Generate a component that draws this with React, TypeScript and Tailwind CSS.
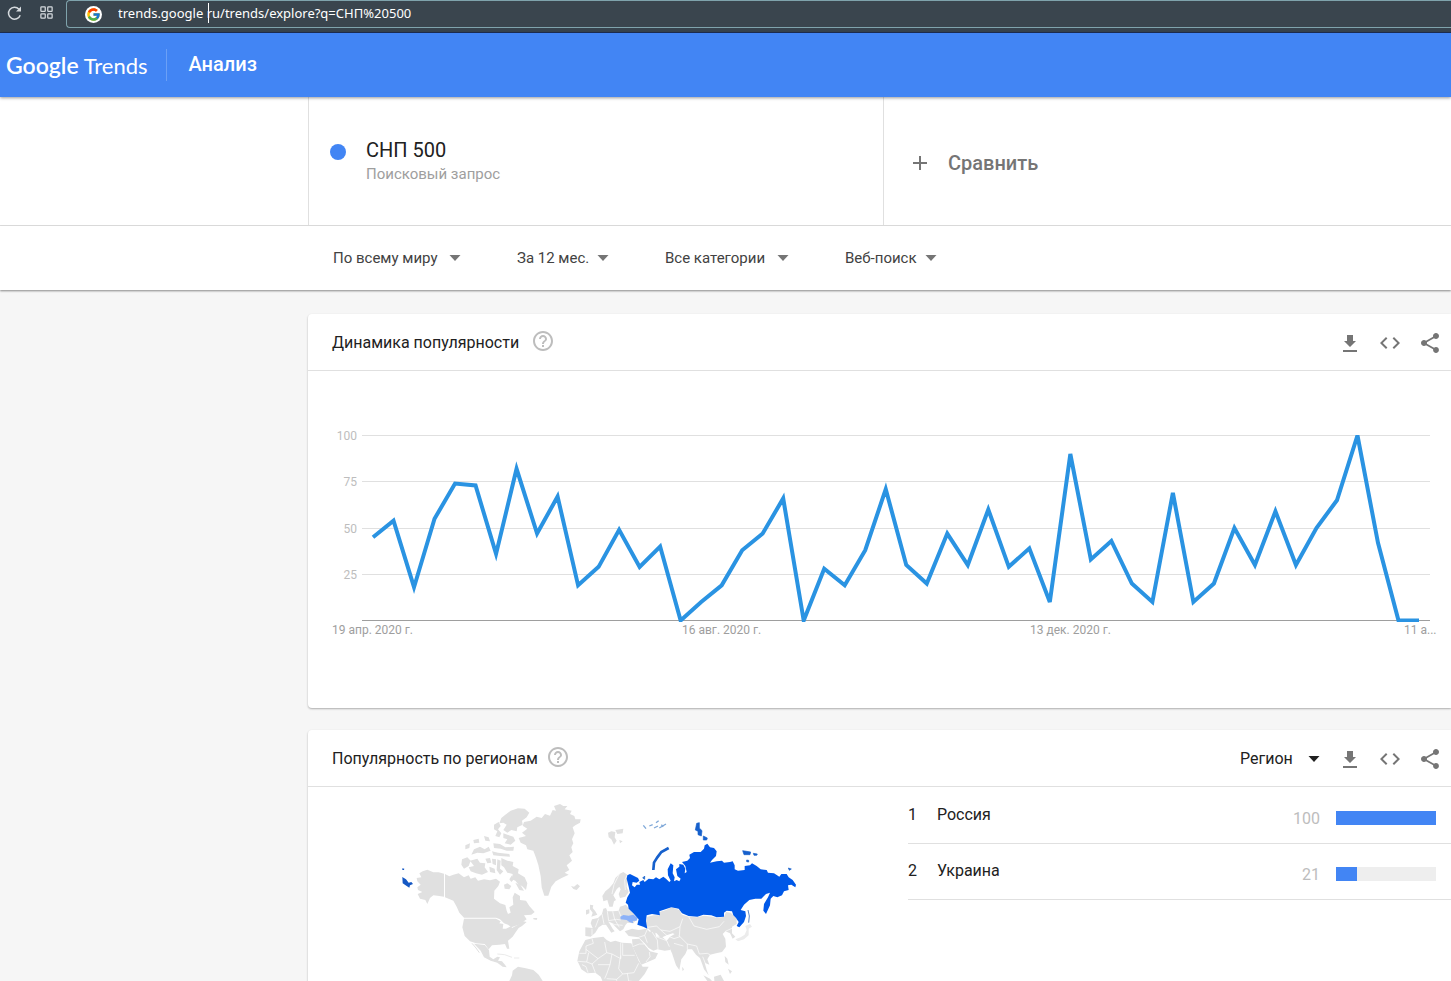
import { useState } from "react";
import type { ReactNode } from "react";
import { FcGoogle } from "react-icons/fc";
import { LuLayoutGrid } from "react-icons/lu";
import { MdAdd, MdCode, MdHelpOutline, MdShare } from "react-icons/md";

// Weekly interest values, 0-100
const interest = [
  45, 54, 18, 55, 74, 73, 36, 82, 47, 67, 19, 29, 49, 29, 40, 0, 10, 19, 38, 47, 66, 0, 28, 19, 38, 71,
  30, 20, 47, 30, 60, 29, 39, 10, 90, 33, 43, 20, 10, 69, 10, 20, 50, 30, 59, 30, 50, 65, 100, 42, 0, 0,
];

const gridLines = [
  { value: 100, y: 64 },
  { value: 75, y: 110 },
  { value: 50, y: 157 },
  { value: 25, y: 203 },
];

const dateLabels = [
  { text: "19 апр. 2020 г.", x: 24 },
  { text: "16 авг. 2020 г.", x: 374 },
  { text: "13 дек. 2020 г.", x: 722 },
  { text: "11 а...", x: 1096 },
];

const filters = [
  { id: "geo", label: "Местоположение", value: "По всему миру", width: "w-[134px]" },
  { id: "time", label: "Период", value: "За 12 мес.", width: "w-[98px]" },
  { id: "category", label: "Категория", value: "Все категории", width: "w-[130px]" },
  { id: "source", label: "Источник", value: "Веб-поиск", width: "w-[98px]" },
];

const regions = [
  { id: 1, name: "Россия", value: 100 },
  { id: 2, name: "Украина", value: 21 },
];

function Caret() {
  return (
    <svg
      viewBox="0 0 24 24"
      className="pointer-events-none absolute right-0 top-0 h-6 w-6"
      fill="currentColor"
      aria-hidden="true"
    >
      <path d="M6.5 9h11L12 15z" />
    </svg>
  );
}

function BrowserBar() {
  const [url, setUrl] = useState("trends.google ru/trends/explore?q=СНП%20500");

  return (
    <div className="flex h-[33px] shrink-0 items-start bg-[#37434d] border-b border-[#1d2f55] pl-[6px]">
      <button aria-label="Обновить" className="mt-[5px] text-[#d5dade]">
        <svg viewBox="0 0 17 17" className="h-[17px] w-[17px]" fill="none" stroke="currentColor" strokeWidth="1.5">
          <path d="M14.2 10.2A6 6 0 1 1 13 4.2" />
          <path d="M15 1.5V6.5H10Z" fill="currentColor" stroke="none" />
        </svg>
      </button>
      <button aria-label="Экспресс-панель" className="ml-4 mt-[5px] text-[#d5dade]">
        <LuLayoutGrid className="h-[15px] w-[15px]" />
      </button>
      <div className="relative ml-3 flex h-7 flex-1 items-center rounded-l border border-r-0 border-[#7fa3ac] bg-[#3a454e] pl-[18px]">
        <span className="rounded-full bg-white p-px">
          <FcGoogle className="h-[15px] w-[15px]" />
        </span>
        <input
          type="text"
          aria-label="Адрес"
          value={url}
          onChange={(e) => setUrl(e.target.value)}
          className="ml-4 flex-1 bg-transparent font-['Noto_Sans',sans-serif] text-[13px] text-white outline-none"
        />
        <span className="absolute left-[141px] top-[2px] h-5 w-px bg-white" />
      </div>
    </div>
  );
}

function Header() {
  return (
    <header className="relative z-20 flex h-16 shrink-0 items-center bg-[#4285f4] pl-[6px] text-white shadow-[0_1px_3px_rgba(0,0,0,0.4)]">
      <a href="#" className="flex items-baseline gap-[5px] font-['Lato',sans-serif] leading-8">
        <span className="text-[23px] font-semibold">Google</span>
        <span className="text-[22px] font-normal">Trends</span>
      </a>
      <div className="ml-[18px] h-8 w-px bg-[#6ba0f6]" />
      <h1 className="ml-[22px] pb-[2px] text-xl font-medium">Анализ</h1>
    </header>
  );
}

function QueryRow() {
  return (
    <div className="flex h-[129px] shrink-0 border-b border-[#e0e0e0] bg-white pl-[308px]">
      <div className="flex w-[576px] items-center border-x border-[#e0e0e0] pl-[21px] pt-[2px]">
        <span className="-mt-5 h-4 w-4 rounded-full bg-[#4285f4]" />
        <div className="ml-5">
          <div className="text-xl leading-6 text-[#212121]">СНП 500</div>
          <div className="text-[15px] leading-6 text-[#9e9e9e]">Поисковый запрос</div>
        </div>
      </div>
      <button className="flex items-center gap-4 pl-6 pt-1 text-xl font-medium text-[#757575]">
        <MdAdd className="h-6 w-6" />
        <span>Сравнить</span>
      </button>
    </div>
  );
}

function FilterRow() {
  return (
    <div className="relative z-10 flex h-16 shrink-0 items-center gap-[50px] bg-white pl-[333px] shadow-[0_1px_2px_rgba(0,0,0,0.45)]">
      {filters.map((filter) => (
        <div key={filter.id} className={`relative text-[#757575] ${filter.width}`}>
          <select
            id={filter.id}
            aria-label={filter.label}
            className="w-full appearance-none bg-transparent text-[15px] text-[#424242] outline-none"
          >
            <option>{filter.value}</option>
          </select>
          <Caret />
        </div>
      ))}
    </div>
  );
}

function CardHeader({ title, helpClass, children }: { title: string; helpClass: string; children?: ReactNode }) {
  return (
    <div className="flex h-[57px] items-center border-b border-[#e0e0e0] pl-6 pr-[9px]">
      <h2 className="pt-px text-base text-[#212121]">{title}</h2>
      <button aria-label="Справка" className={`pb-[2px] text-[#bdbdbd] ${helpClass}`}>
        <MdHelpOutline className="h-6 w-6" />
      </button>
      <div className="ml-auto flex items-center gap-4 pt-[2px] text-[#757575]">
        {children}
        <button aria-label="Скачать CSV">
          <svg viewBox="0 0 24 24" className="h-6 w-6" fill="currentColor">
            <path d="M18 10h-3V4H9v6H6l6 6 6-6zM5 19v2h14v-2H5z" />
          </svg>
        </button>
        <button aria-label="Встроить">
          <MdCode className="h-6 w-6" />
        </button>
        <button aria-label="Поделиться">
          <MdShare className="h-6 w-6" />
        </button>
      </div>
    </div>
  );
}

function TimelineChart() {
  const points = interest.map((value, i) => `${65 + (i * 1046) / 51},${249.5 - value * 1.85}`).join(" ");

  return (
    <svg viewBox="0 0 1143 337" className="block w-full" role="img" aria-label="Динамика популярности">
      <clipPath id="plot-area">
        <rect x="54" y="64" width="1068" height="187" />
      </clipPath>
      {gridLines.map((line) => (
        <g key={line.value}>
          <path d={`M54 ${line.y + 0.5}H1122`} stroke="#e0e0e0" />
          <text x="49" y={line.y + 5} textAnchor="end" fontSize="12" fill="#bdbdbd">
            {line.value}
          </text>
        </g>
      ))}
      <path d="M54 249.5H1122" stroke="#9e9e9e" />
      <polyline points={points} fill="none" stroke="#2a93e2" strokeWidth="4" clipPath="url(#plot-area)" />
      {dateLabels.map((label) => (
        <text key={label.text} x={label.x} y="263" fontSize="12" fill="#9e9e9e">
          {label.text}
        </text>
      ))}
    </svg>
  );
}

function WorldMap() {
  return (
    <svg viewBox="0 0 1260 630" className="h-[210px] w-[420px] shrink-0" role="img" aria-label="Карта мира">
      <g fill="#e0e0e0">
        {/* Greenland, Iceland */}
        <path d="M463 317 455 292 452 258 445 225 438 203 430 182 412 178 408 166 392 158 386 144 408 138 396 128 412 116 398 107 402 96 422 92 440 80 455 84 465 72 480 77 488 60 498 62 492 48 510 42 520 48 532 48 524 58 545 62 540 72 553 78 556 88 572 88 570 98 556 106 548 112 554 130 546 148 550 160 544 172 548 186 538 196 546 212 530 226 538 240 524 248 536 254 515 264 497 274 484 290 475 317Z" />
        <path d="M543 288 552 290 562 282 570 289 560 300 550 297Z" />
        {/* Alaska */}
        <path d="M162 251V320L148 318 130 316 120 324 112 342 106 330 90 326 83 312 97 306 84 300 82 292 92 284 82 274 80 264 94 262 88 250 98 244 112 239 130 247 146 247Z" />
        {/* Canada */}
        <path d="M165 252 178 259 190 254 206 250 222 262 236 256 242 266 256 262 264 272 282 268 300 271 318 266 330 275 325 288 313 302 312 326 330 340 346 345 350 362 354 372 362 368 358 352 370 344 368 322 374 308 390 318 390 330 408 332 418 348 434 366 424 374 402 376 410 388 386 404 364 412 354 404 342 400 330 388 318 383H222L208 368 200 350 190 332 165 322Z" />
        <path d="M334 204 352 212 370 216 368 228 386 238 384 250 404 262 412 280 408 300 396 288 386 284 376 272 366 268 368 252 352 248 342 232 334 226Z" />
        <path d="M342 284 352 280 364 288 358 298 344 296ZM366 256 372 268 364 276 358 268ZM376 278 392 286 402 302 388 300ZM430 384 442 384 440 390 430 388Z" />
        <path d="M328 100 334 84 344 76 362 62 384 55 404 56 418 68 410 82 396 92 398 104 382 112 380 124 364 120 352 128 340 120 350 104 340 98Z" />
        <path d="M312 104 326 96 332 108 324 118 334 130 328 142 316 138 322 124 312 118ZM340 130 352 134 370 140 376 152 362 164 344 160 352 148 340 144Z" />
        <path d="M310 160 330 162 346 172 372 170 370 182 350 182 332 176 312 174ZM282 138 296 142 300 154 286 152ZM250 150 266 146 268 158 252 160ZM226 166 240 160 238 174 226 178ZM252 178 270 170 284 178 296 170 302 182 280 190 262 188 244 194ZM306 184 324 188 358 192 360 200 330 198 310 196Z" />
        <path d="M216 208 232 202 242 212 236 228 222 236 214 224ZM240 212 262 206 270 218 286 220 284 232 294 246 276 254 258 250 242 244 236 232 252 228ZM286 206 300 204 304 218 292 220ZM306 206 318 208 318 226 308 222ZM322 208 332 212 330 236 340 244 330 254 320 240ZM298 230 314 236 316 250 300 246Z" />
        {/* USA, Mexico, Central America */}
        <path d="M222 386H318L332 394 328 400 340 402 338 416 348 416 364 408 366 414 384 404 394 392 410 396 396 408 386 414 376 428 368 440 354 452 358 476 351 476 345 462 328 464 306 466 296 478 284 462 258 460 240 454 224 438 217 412Z" />
        <path d="M252 461 284 465 297 480 299 500 310 508 322 500 330 502 324 512 336 514 346 526 350 532 338 530 322 518 302 512 282 502 272 482Z" />
        <path d="M246 460 258 474 268 488" fill="none" stroke="#e0e0e0" strokeWidth="3" />
        <path d="M322 492 344 494 366 502M372 504 388 504" fill="none" stroke="#ebebeb" strokeWidth="3" />
        {/* South America */}
        <path d="M358 573 366 556 368 542 384 530 404 534 430 540 446 554 458 573 490 592 530 604 520 630H356Z" />
      </g>
      <g transform="translate(540 0)" fill="#e0e0e0">
        {/* Svalbard */}
        <path d="M114 128 124 124 136 126 134 142 140 152 132 164 124 148 116 142ZM136 120 160 116 158 130 142 132ZM148 150 158 154 150 160Z" />
        {/* Scandinavia */}
        <path d="M172 254 160 246 148 252 136 264 130 280 118 294 106 304 97 318 100 334 112 330 118 350 128 350 132 334 138 330 130 316 140 298 148 290 152 298 146 312 150 324 166 320 176 306 170 290Z" />
        {/* British Isles */}
        <path d="M60 344 70 346 68 354 76 364 82 374 64 380 68 368 60 358ZM48 360 58 358 58 370 48 374Z" />
        {/* Continental Europe */}
        <path d="M46 412 68 414 62 400 66 388 84 384 96 372 100 356 108 354 112 364 130 364 146 362 150 350 168 344 178 358 190 370 204 384 190 400 172 398 166 406 160 418 150 424 140 414 126 400 116 396 128 416 134 424 124 428 108 404 98 404 86 412 76 428 62 440 46 438Z" />
        {/* Turkey, Caucasus, Middle East */}
        <path d="M164 424 186 416 206 420 230 416 240 426 246 420 256 428 258 440 276 440 290 452 300 440 318 430 330 440 330 460 310 462 300 480 284 482 262 478 250 482 236 474 224 460 216 452 206 442 176 438Z" />
        <path d="M186 448 208 446 222 462 240 484 264 490 256 506 214 524 202 500 188 470Z" />
        {/* Central Asia */}
        <path d="M230 412 228 396 232 380 250 376 270 376 268 366 288 360 304 352 328 360 336 374 356 380 380 382 402 377 426 380 442 384 462 380 468 366 482 368 490 376 500 388 500 402 486 410 486 430 496 440 488 446 480 430 466 424 458 432 466 446 468 470 456 486 438 490 420 494 412 508 418 524 404 518 410 540 416 556 402 538 390 504 378 494 366 478 352 478 346 492 334 508 328 540 318 526 306 490 298 472 310 460 330 458 328 438 308 430 290 436 272 444 260 430 246 426Z" />
        {/* Islands south of Asia */}
        <path d="M336 530 342 538 338 544ZM400 556 420 566 440 590 424 590ZM432 560 452 554 462 573 450 590 434 582ZM464 498 472 506 476 524 466 516ZM474 536 486 544 480 552Z" />
        {/* Japan */}
        <path d="M496 448 512 442 524 434 530 420 526 408 540 402 546 410 536 416 536 436 522 448 504 454Z" fill="#ececec" />
        {/* Africa */}
        <path d="M46 450 70 444 100 440 110 450 122 456 136 452 156 458 184 460 194 484 206 512 218 530 236 530 224 552 204 576 200 600 206 630H110L104 590 92 560 76 548 52 550 34 538 22 512 28 484Z" />
      </g>
      {/* Country borders */}
      <g transform="translate(540 0)" fill="none" stroke="#fff" strokeWidth="2">
        <path d="M28 490H48V468L70 460 66 446M48 478 84 506 110 488 104 456M110 488 126 492 152 506V458M158 460V496H194M152 506V496M24 514 50 516 56 488M50 516 66 522 84 506M66 522 76 548M84 524H120L126 492M120 524 110 552 104 566M150 506 146 536 158 552 192 548 206 520M158 552 140 568 110 566M140 568V600M172 550 176 573 200 576M36 524 48 530 54 548" />
        <path d="M76 412 86 386M96 372 102 402M112 364 116 392 140 388 152 390M128 364 134 388 148 412M146 362 154 382M116 396 134 404 158 406M66 416V436" />
        <path d="M172 254 164 270 166 300M148 252 132 284 126 312M206 442 224 436 232 418M224 436 232 458M246 426 262 450 264 478M258 440 290 452 298 470M290 436 312 446 330 440M188 470 208 462 222 462M228 516 240 500 238 486" />
        <path d="M232 412 260 408 272 420 300 424 330 410 338 386M272 420 290 436M356 380 372 408 410 418 448 410 462 394M330 410 328 438 352 462 380 468 388 492M352 462 352 478M312 460 340 468M388 492 412 490 420 494M398 500 406 520M466 424 488 414" />
      </g>
      {/* Ukraine */}
      <path
        transform="translate(540 0)"
        d="M151 380 160 375 176 377 190 374 203 384 200 392 188 393 190 400 178 396 170 390 152 388Z"
        fill="#8db2f8"
      />
      {/* Russia */}
      <g fill="#0058e8">
        <g transform="translate(540 0)">
          <path d="M172 256 180 252 192 258 204 264 208 272 200 278 188 276 186 286 194 292 200 284 210 284 208 276 220 270 224 276 236 266 250 268 258 262 268 268 280 260 288 266 298 276 302 272 294 256 293 238 302 220 310 226 308 250 314 262 312 274 320 270 328 274 332 266 322 258 318 238 328 230 328 222 340 224 346 236 344 250 350 246 346 228 336 216 352 212 360 204 358 194 372 186 392 186 402 176 404 166 412 161 420 172 432 174 440 184 438 198 426 210 420 218 440 214 456 212 462 218 480 216 488 214 494 226 494 238 504 242 524 240 524 228 540 226 546 220 560 228 572 238 590 240 594 248 612 250 628 260 634 252 650 252 656 262 668 270 678 284 676 292 664 284 654 286 656 300 642 304 636 316 622 322 610 318 602 326 600 346 588 372 580 362 582 342 594 322 600 308 588 312 574 326 556 326 538 330 522 344 512 360 526 364 528 378 522 396 508 412 500 408 506 396 498 384 490 376 486 364 470 362 462 368 462 380 440 382 424 376 400 374 382 380 356 378 336 370 326 356 304 352 286 358 268 364 270 376 246 372 230 376 228 394 232 416 220 410 202 404 206 388 190 370 176 356 174 344 167 338 172 322 180 308 176 290 170 266Z" />
          <path d="M250 240 252 218 262 202 274 186 296 174" fill="none" stroke="#1660cc" strokeWidth="8" />
          <path d="M380 100 388 98 388 114 396 122 394 138 384 134 384 124 376 120ZM400 138 412 144 410 150 400 150ZM518 182 530 184 542 186 540 194 522 194ZM550 190 562 192 560 196 552 196ZM530 210 536 211 536 216 530 215ZM655 234 664 237 658 241ZM218 264 224 258 224 268Z" fill="#1660cc" stroke="#1660cc" strokeWidth="2" />
          <path d="M534 360 538 378 536 398" fill="none" stroke="#5d86c6" strokeWidth="3" />
          <path d="M220 106 228 116M238 108 248 104M252 114 264 108M258 98 266 92M268 114 288 102M274 104 280 110" fill="none" stroke="#7fa8d8" strokeWidth="4" />
        </g>
        <path d="M37 261 48 268 56 278 64 276 69 282 60 286 58 293 50 288 38 280ZM37 235 43 236 42 240 37 240Z" fill="#1558c4" />
      </g>
    </svg>
  );
}

function RegionList() {
  return (
    <ol className="flex-1 pt-px">
      {regions.map((region) => (
        <li
          key={region.id}
          className="flex h-14 items-center border-b border-[#e0e0e0] pb-[2px] pr-[15px] text-base text-[#212121]"
        >
          <span className="w-[29px]">{region.id}</span>
          <span className="flex-1">{region.name}</span>
          <span className="mt-2 text-[#bdbdbd]">{region.value}</span>
          <div className="ml-4 mt-[6px] h-[14px] w-[100px] bg-[#eeeeee]">
            <div className="h-full bg-[#4285f4]" style={{ width: `${region.value}%` }} />
          </div>
        </li>
      ))}
    </ol>
  );
}

export default function App() {
  return (
    <div className="flex h-screen flex-col overflow-hidden bg-[#f6f6f6] font-['Roboto',sans-serif]">
      <BrowserBar />
      <Header />
      <QueryRow />
      <FilterRow />
      <main className="min-h-0 flex-1 overflow-hidden pl-[308px] pt-6">
        <section className="rounded-l-sm bg-white shadow-[0_1px_2px_rgba(0,0,0,0.3)]">
          <CardHeader title="Динамика популярности" helpClass="ml-3" />
          <TimelineChart />
        </section>
        <section className="mt-[22px] rounded-l-sm bg-white shadow-[0_1px_2px_rgba(0,0,0,0.3)]">
          <CardHeader title="Популярность по регионам" helpClass="ml-2">
            <div className="relative -mr-1 w-[86px] text-[#212121]">
              <select
                aria-label="Детализация"
                className="w-full appearance-none bg-transparent text-base outline-none"
              >
                <option>Регион</option>
              </select>
              <Caret />
            </div>
          </CardHeader>
          <div className="flex gap-[98px] pl-[82px]">
            <div className="pt-[3px]">
              <WorldMap />
            </div>
            <RegionList />
          </div>
        </section>
      </main>
    </div>
  );
}
